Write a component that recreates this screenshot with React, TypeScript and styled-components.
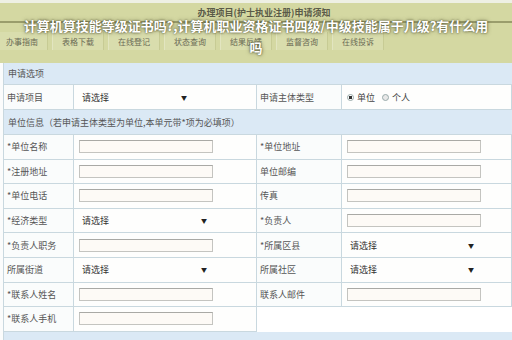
import React from "react";
import styled, { createGlobalStyle } from "styled-components";

const Global = createGlobalStyle`
  html, body { margin: 0; padding: 0; background: #ffffff; }
  body { width: 512px; height: 340px; overflow: hidden; font-family: "Noto Sans CJK SC", "Noto Sans", sans-serif; }
`;

const Page = styled.div`
  position: relative;
  width: 512px;
  height: 340px;
  overflow: hidden;
  background: #fbfcfc;
`;

const Header = styled.div`
  height: 63px;
  background: #d4d8a2;
  border-top: 3px solid #eef0e4;
  box-sizing: border-box;
  display: flex;
  flex-direction: column;
`;

const PageTitle = styled.div`
  height: 18px;
  display: flex;
  align-items: center;
  justify-content: center;
  padding-left: 16px;
  font-size: 9px;
  font-weight: bold;
  color: #5a5a48;
`;

const Rule = styled.div`
  height: 2px;
  background: #9a9d6c;
  margin-bottom: 9px;
`;

const Tabs = styled.div`
  display: flex;
  gap: 4px;
  height: 18px;
  margin-left: -4px;
`;

const Tab = styled.div`
  width: 50px;
  display: flex;
  align-items: center;
  justify-content: center;
  font-size: 8px;
  color: #6a6a55;
  background: #d9ddad;
  border-left: 1px solid #e2e5c0;
  border-right: 1px solid #c7cb94;
`;

const Caption = styled.div`
  position: absolute;
  top: 15px;
  left: 0;
  right: 0;
  text-align: center;
  font-size: 13px;
  line-height: 22px;
  font-weight: bold;
  color: #ffffff;
  white-space: nowrap;
  text-shadow: 0 0 2px rgba(60, 60, 30, 0.9), 0 0 4px rgba(60, 60, 30, 0.6);
`;

const Form = styled.div`
  display: grid;
  grid-template-columns: 70px 183px 85px 1fr;
  margin-left: 3px;
  border-left: 1px solid #c9d8df;
  font-size: 9px;
  color: #555555;
`;

const Band = styled.div<{ $h: number }>`
  grid-column: 1 / -1;
  height: ${(p) => p.$h}px;
  box-sizing: border-box;
  background: #dbe9f5;
  border-bottom: 1px solid #c9d8df;
  display: flex;
  align-items: ${(p) => (p.$h < 24 ? "flex-start" : "center")};
  padding: ${(p) => (p.$h < 24 ? "4px 4px 0" : "0 4px")};
  font-size: 9px;
  color: #555;
`;

const Cell = styled.div<{ $label?: boolean; $empty?: boolean; $h?: number }>`
  height: ${(p) => p.$h ?? 24.6}px;
  box-sizing: border-box;
  border-bottom: ${(p) => (p.$empty ? "none" : "1px solid #c9d8df")};
  border-right: ${(p) => (p.$empty ? "none" : "1px solid #c9d8df")};
  background: ${(p) => (p.$empty ? "#ffffff" : p.$label ? "#fafcfc" : "#fefefd")};
  display: flex;
  align-items: center;
  padding-left: ${(p) => (p.$label ? 3 : 5)}px;
  white-space: nowrap;
`;

const Input = styled.div<{ $w: number }>`
  width: ${(p) => p.$w}px;
  height: 13px;
  box-sizing: border-box;
  border: 1px solid #c4c4c0;
  border-top-color: #a9a9a5;
  background: #fdfaf6;
`;

const Select = styled.div<{ $w: number }>`
  width: ${(p) => p.$w}px;
  display: flex;
  align-items: center;
  justify-content: space-between;
  padding-left: 3px;
  box-sizing: border-box;
  font-size: 9px;
  color: #333;
`;

const Arrow = styled.span`
  font-size: 6px;
  color: #222;
  padding-right: 4px;
`;

const Radios = styled.div`
  display: flex;
  align-items: center;
  gap: 3px;
  color: #444;
`;

const Radio = styled.span<{ $on?: boolean }>`
  width: 7px;
  height: 7px;
  border-radius: 50%;
  box-sizing: border-box;
  border: 1px solid #9aa;
  background: ${(p) => (p.$on ? "radial-gradient(circle, #333 0 1.6px, #fff 2px)" : "#e8e8e8")};
  margin-left: ${(p) => (p.$on ? 0 : 4)}px;
`;

type Field = { label: string; kind: "input" | "select" | "none" };

const rows: [Field, Field][] = [
  [{ label: "*单位名称", kind: "input" }, { label: "*单位地址", kind: "input" }],
  [{ label: "*注册地址", kind: "input" }, { label: "单位邮编", kind: "input" }],
  [{ label: "*单位电话", kind: "input" }, { label: "传真", kind: "input" }],
  [{ label: "*经济类型", kind: "select" }, { label: "*负责人", kind: "input" }],
  [{ label: "*负责人职务", kind: "input" }, { label: "*所属区县", kind: "select" }],
  [{ label: "所属街道", kind: "select" }, { label: "所属社区", kind: "select" }],
  [{ label: "*联系人姓名", kind: "input" }, { label: "联系人邮件", kind: "input" }],
  [{ label: "*联系人手机", kind: "input" }, { label: "", kind: "none" }],
];

const tabs = ["办事指南", "表格下载", "在线登记", "状态查询", "结果反馈", "监督咨询", "在线投诉"];

function Value({ f, left }: { f: Field; left: boolean }) {
  if (f.kind === "input") return <Input $w={134} />;
  if (f.kind === "select")
    return (
      <Select $w={left ? 132 : 131}>
        请选择<Arrow>▼</Arrow>
      </Select>
    );
  return null;
}

export default function App() {
  return (
    <Page>
      <Global />
      <Header>
        <PageTitle>办理项目(护士执业注册)申请须知</PageTitle>
        <Rule />
        <Tabs>
          {tabs.map((t) => (
            <Tab key={t}>{t}</Tab>
          ))}
        </Tabs>
      </Header>
      <Form>
        <Band $h={22}>申请选项</Band>
        <Cell $label $h={25}>申请项目</Cell>
        <Cell $h={25}>
          <Select $w={112}>
            请选择<Arrow>▼</Arrow>
          </Select>
        </Cell>
        <Cell $label $h={25}>申请主体类型</Cell>
        <Cell $h={25}>
          <Radios>
            <Radio $on />
            单位
            <Radio />
            个人
          </Radios>
        </Cell>
        <Band $h={25}>单位信息（若申请主体类型为单位,本单元带*项为必填项）</Band>
        {rows.map(([l, r], i) => (
          <React.Fragment key={i}>
            <Cell $label>{l.label}</Cell>
            <Cell>
              <Value f={l} left />
            </Cell>
            <Cell $label $empty={r.kind === "none"}>{r.label}</Cell>
            <Cell $empty={r.kind === "none"}>
              <Value f={r} left={false} />
            </Cell>
          </React.Fragment>
        ))}
        <Band $h={12} />
      </Form>
      <Caption>
        计算机算技能等级证书吗?,计算机职业资格证书四级/中级技能属于几级?有什么用
        <br />吗
      </Caption>
    </Page>
  );
}
